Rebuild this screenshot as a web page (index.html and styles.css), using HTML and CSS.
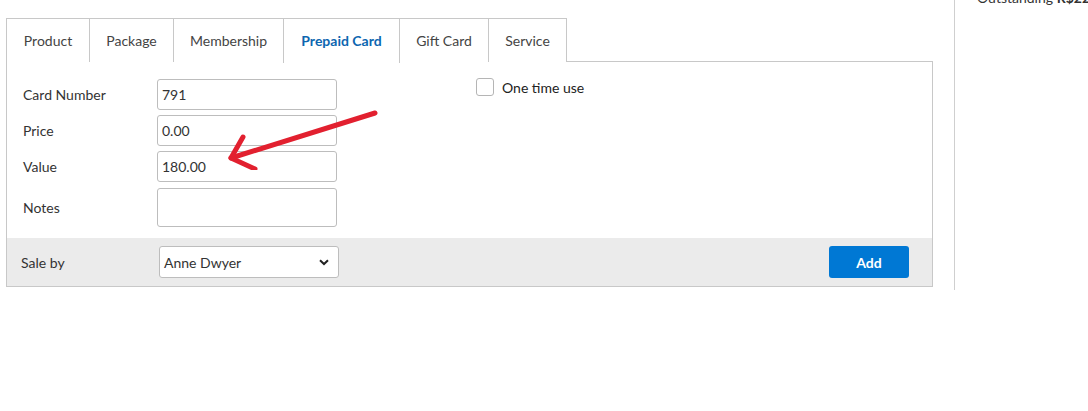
FILE: index.html
```html
<!DOCTYPE html>
<html>
<head>
<meta charset="utf-8">
<link rel="stylesheet" href="styles.css">
</head>
<body>
<div class="page">
  <div class="main">
    <div class="tabs">
      <div class="tab">Product</div>
      <div class="tab">Package</div>
      <div class="tab">Membership</div>
      <div class="tab active">Prepaid Card</div>
      <div class="tab">Gift Card</div>
      <div class="tab">Service</div>
    </div>
    <div class="panel">
      <div class="body">
        <div class="fields">
          <div class="row"><label class="lbl">Card Number</label><div class="input">791</div></div>
          <div class="row"><label class="lbl">Price</label><div class="input">0.00</div></div>
          <div class="row"><label class="lbl">Value</label><div class="input">180.00</div></div>
          <div class="row notes"><label class="lbl">Notes</label><div class="input tall"></div></div>
        </div>
        <div class="check"><span class="box"></span><span>One time use</span></div>
        <svg class="arrow" width="160" height="70" viewBox="0 0 160 70">
          <g fill="none" stroke="#e2202f" stroke-width="5" stroke-linecap="round" stroke-linejoin="round">
            <path d="M149 13 L5 58"/>
            <path d="M17 37 L5 58 L29 69"/>
          </g>
        </svg>
      </div>
      <div class="footer">
        <span class="salelbl">Sale by</span>
        <div class="select"><span>Anne Dwyer</span>
          <svg width="10" height="7" viewBox="0 0 10 7"><path d="M1 1.2 L5 5 L9 1.2" fill="none" stroke="#222" stroke-width="2"/></svg>
        </div>
        <button class="add">Add</button>
      </div>
    </div>
  </div>
  <div class="side">
    <div class="outstanding">Outstanding <b>R$22.00</b></div>
  </div>
</div>
</body>
</html>
```

FILE: styles.css
```css
* { box-sizing: border-box; }
body {
  margin: 0;
  font-family: Lato, "Open Sans", sans-serif;
  font-size: 14px;
  color: #333;
  background: #fff;
}
.page {
  display: flex;
  height: 290px;
}
.main {
  width: 955px;
  border-right: 1px solid #cfcfcf;
  padding: 18px 0 0 6px;
}
.tabs {
  display: flex;
  height: 44px;
  position: relative;
  z-index: 1;
}
.tab {
  border: 1px solid #c8c8c8;
  border-bottom: none;
  margin-right: -1px;
  display: flex;
  align-items: center;
  justify-content: center;
  color: #444;
  background: #fff;
}
.tab:nth-child(1) { width: 84px; }
.tab:nth-child(2) { width: 85px; }
.tab:nth-child(3) { width: 111px; }
.tab:nth-child(4) { width: 117px; }
.tab:nth-child(5) { width: 90px; }
.tab:nth-child(6) { width: 79px; }
.tab.active {
  color: #0d66b0;
  font-weight: 700;
  height: 45px;
  padding-bottom: 1px;
}
.panel {
  width: 927px;
  border: 1px solid #c8c8c8;
  margin-top: -1px;
}
.body {
  position: relative;
  height: 176px;
  padding: 17px 0 0 16px;
  display: flex;
}
.fields {
  display: flex;
  flex-direction: column;
  gap: 5px;
}
.row {
  display: flex;
  align-items: center;
}
.row.notes { margin-top: 1px; }
.lbl {
  width: 134px;
  color: #333;
}
.input {
  width: 180px;
  height: 31px;
  border: 1px solid #bdbdbd;
  border-radius: 3px;
  padding: 0 4px;
  display: flex;
  align-items: center;
  color: #333;
}
.input.tall { height: 39px; }
.check {
  display: flex;
  align-items: center;
  gap: 8px;
  margin-left: 139px;
  margin-top: -1px;
  height: 18px;
  color: #222;
}
.box {
  width: 18px;
  height: 18px;
  border: 1px solid #b5b5b5;
  border-radius: 3px;
}
.arrow {
  position: absolute;
  left: 219px;
  top: 38px;
}
.footer {
  height: 48px;
  background: #ebebeb;
  display: flex;
  align-items: center;
  padding: 0 23px 0 14px;
}
.salelbl {
  width: 138px;
  color: #333;
}
.select {
  width: 180px;
  height: 32px;
  background: #fff;
  border: 1px solid #bdbdbd;
  border-radius: 3px;
  display: flex;
  align-items: center;
  justify-content: space-between;
  padding: 0 9px 0 4px;
  color: #333;
}
.add {
  margin-left: auto;
  width: 80px;
  height: 32px;
  border: none;
  border-radius: 3px;
  background: #0078d4;
  color: #fff;
  font-family: Lato, "Open Sans", sans-serif;
  font-weight: 700;
  font-size: 14px;
}
.side {
  flex: 1;
  position: relative;
}
.outstanding {
  position: absolute;
  left: 22px;
  top: -12px;
  line-height: 20px;
  white-space: nowrap;
  color: #333;
}
```
